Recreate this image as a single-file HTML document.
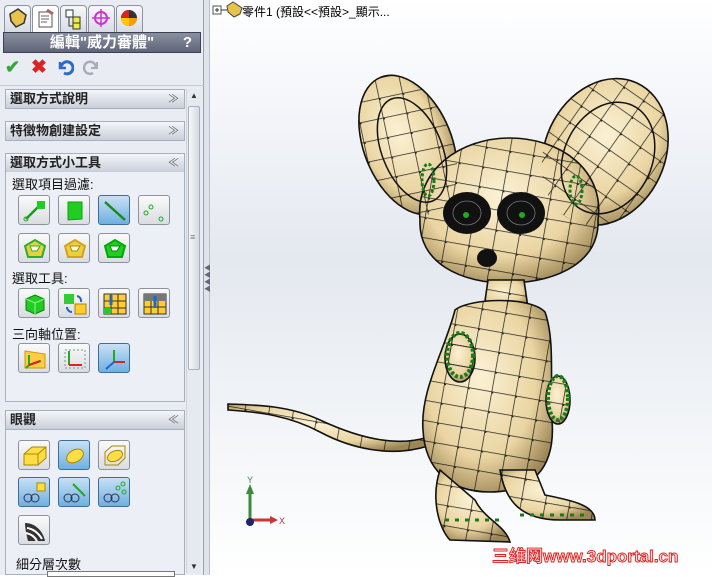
<!DOCTYPE html>
<html><head><meta charset="utf-8"><style>
*{margin:0;padding:0;box-sizing:border-box}
body{width:712px;height:575px;overflow:hidden;position:relative;font-family:"Liberation Sans","Noto Sans CJK TC",sans-serif;background:#fff}
#panel{position:absolute;left:0;top:0;width:204px;height:575px;background:#e9ecf3;border-right:1px solid #9aa0ac}
#sep{position:absolute;left:204px;top:0;width:6px;height:575px;background:#dfe3ea;border-right:1px solid #b9bec8}
#view{position:absolute;left:210px;top:0;width:502px;height:575px;background:linear-gradient(#ffffff 0%,#f3f5f9 20%,#e4e8ef 45%,#eef1f5 65%,#ffffff 100%)}
.tab{position:absolute;top:5px;width:27px;height:27px;border:1px solid #8d93a0;border-bottom:none;border-radius:4px 4px 0 0;background:linear-gradient(#f7f8fb,#d7dbe4)}
.abs{position:absolute}
.title{position:absolute;left:3px;top:32px;width:198px;height:21px;background:linear-gradient(#8a8fa0,#5f6478);border:1px solid #3c4050;color:#fff;font-weight:bold;font-size:15px;line-height:19px;text-align:center}
.hdr{position:absolute;left:5px;width:180px;height:20px;border:1px solid #a9b0bd;background:linear-gradient(#f3f5f9,#c9ced9);font-weight:bold;font-size:13px;line-height:18px;padding-left:4px;color:#222}
.hdr span{position:absolute;right:5px;top:0;font-size:11px;color:#666;font-weight:normal}
.box{position:absolute;left:5px;width:180px;border:1px solid #a9b0bd;border-top:none;background:#eceff5}
.lbl{position:absolute;left:12px;font-size:13px;color:#111}
.btn{position:absolute;width:32px;height:30px;border:1px solid #8c929e;border-radius:3px;background:linear-gradient(#fafafa,#d9dce2)}
.btn.sel{background:linear-gradient(#c8e0f4,#6fb0e0);border-color:#3d6d99}
.btn svg{position:absolute;left:3px;top:3px}
</style></head><body>
<div id="panel">
 <div class="tab" style="left:4px"><svg width="25" height="25"><path d="M5 8l8-5 8 6-2 8-8 4-5-6z" fill="#e8c24a" stroke="#333" stroke-width="1.5"/></svg></div>
 <div class="tab" style="left:32px;background:#fff"><svg width="25" height="25"><rect x="6" y="6" width="13" height="15" fill="#fff" stroke="#555"/><path d="M8 10h8M8 13h8M8 16h6" stroke="#666"/><path d="M14 4l6 4" stroke="#a66" stroke-width="3"/></svg></div>
 <div class="tab" style="left:60px"><svg width="25" height="25"><rect x="5" y="4" width="7" height="7" fill="#fff" stroke="#333"/><rect x="12" y="11" width="7" height="6" fill="#ee4" stroke="#333"/><rect x="12" y="17" width="7" height="6" fill="#ee4" stroke="#333"/><path d="M8 11v9h4" stroke="#333" fill="none"/></svg></div>
 <div class="tab" style="left:88px"><svg width="25" height="25"><circle cx="12" cy="12" r="6" fill="none" stroke="#c3c" stroke-width="2"/><path d="M12 3v18M3 12h18" stroke="#c3c" stroke-width="1.5"/></svg></div>
 <div class="tab" style="left:116px"><svg width="25" height="25"><circle cx="12" cy="12" r="8" fill="#333"/><path d="M12 12L4 12A8 8 0 0 1 12 4z" fill="#d22"/><path d="M12 12L20 12A8 8 0 0 1 12 20z" fill="#f90"/><path d="M12 12L12 20A8 8 0 0 1 4 12z" fill="#fc0"/></svg></div>
 <div class="title">編輯"威力審體"<span style="position:absolute;right:8px">?</span></div>
 <div class="abs" style="left:5px;top:57px;font-size:18px;color:#3a3;font-weight:bold">✔</div>
 <div class="abs" style="left:31px;top:56px;font-size:19px;color:#d22;font-weight:bold">✖</div>
 <svg class="abs" style="left:56px;top:58px" width="18" height="18"><path d="M4 4v6h6" fill="none" stroke="#2a6ac8" stroke-width="2.5"/><path d="M5 10a6 6 0 1 1 3 5" fill="none" stroke="#2a6ac8" stroke-width="3"/></svg>
 <svg class="abs" style="left:83px;top:58px" width="18" height="18"><path d="M14 4v6h-6" fill="none" stroke="#aab" stroke-width="2"/><path d="M13 10a6 6 0 1 0-3 5" fill="none" stroke="#aab" stroke-width="2.5"/></svg>
 <div class="abs" style="left:0;top:85px;width:204px;border-top:1px solid #c4c9d3"></div>
 <div class="abs" style="left:186px;top:89px;width:15px;height:484px;background:#e6e9ef;border-left:1px solid #cfd3db"></div>
 <div class="abs" style="left:188px;top:106px;width:12px;height:264px;background:linear-gradient(90deg,#f6f7f9,#d6dae2);border:1px solid #a9afba;border-radius:2px"></div>
 <div class="abs" style="left:190px;top:91px;font-size:8px;color:#333">▲</div>
 <div class="abs" style="left:190px;top:562px;font-size:8px;color:#333">▼</div>
 <div class="abs" style="left:190px;top:232px;font-size:9px;color:#777">≡</div>
 <div class="hdr" style="top:89px">選取方式說明<span>≫</span></div>
 <div class="hdr" style="top:121px">特徵物創建設定<span>≫</span></div>
 <div class="hdr" style="top:153px">選取方式小工具<span>≪</span></div>
 <div class="box" style="top:172px;height:230px"></div>
 <div class="lbl" style="top:174px">選取項目過濾:</div>
 <div class="btn" style="left:18px;top:195px"><svg width="26" height="24"><path d="M4 20L20 4" stroke="#1a9a1a" stroke-width="2.5"/><rect x="15" y="2" width="8" height="8" fill="#2c2"/><circle cx="4" cy="20" r="2" fill="none" stroke="#2a2"/></svg></div>
 <div class="btn" style="left:58px;top:195px"><svg width="26" height="24"><path d="M6 3h14v17l-14 1z" fill="#2c2" stroke="#0a0"/></svg></div>
 <div class="btn sel" style="left:98px;top:195px"><svg width="26" height="24"><path d="M3 3L23 21" stroke="#1a8a1a" stroke-width="2.5"/></svg></div>
 <div class="btn" style="left:138px;top:195px"><svg width="26" height="24"><circle cx="9" cy="8" r="2" fill="none" stroke="#2a2"/><circle cx="4" cy="14" r="2" fill="none" stroke="#2a2"/><circle cx="19" cy="20" r="2" fill="none" stroke="#2a2"/></svg></div>
 <div class="btn" style="left:18px;top:233px"><svg width="26" height="24"><path d="M3 9l10-6 10 6-3 11H6z" fill="#e8d23a" stroke="#3a3" stroke-width="2"/><path d="M8 9h10l-3 5H10z" fill="#fff" stroke="#3a3"/></svg></div>
 <div class="btn" style="left:58px;top:233px"><svg width="26" height="24"><path d="M3 9l10-6 10 6-3 11H6z" fill="#e8d23a" stroke="#d8a020" stroke-width="2"/><path d="M8 9h10l-3 5H10z" fill="#fff" stroke="#a80"/></svg></div>
 <div class="btn" style="left:98px;top:233px"><svg width="26" height="24"><path d="M3 9l10-6 10 6-3 11H6z" fill="#2c2" stroke="#0a0" stroke-width="2"/><path d="M8 9h10l-3 5H10z" fill="#fff" stroke="#080"/></svg></div>
 <div class="lbl" style="top:268px">選取工具:</div>
 <div class="btn" style="left:18px;top:288px"><svg width="26" height="24"><path d="M4 7l9-4 9 4v11l-9 4-9-4z" fill="#2c2" stroke="#080"/><path d="M4 7l9 4 9-4M13 11v11" stroke="#9e9" fill="none"/></svg></div>
 <div class="btn" style="left:58px;top:288px"><svg width="26" height="24"><rect x="2" y="2" width="10" height="10" fill="#3c3"/><rect x="13" y="12" width="11" height="10" fill="#fc3" stroke="#a80"/><path d="M15 4a5 5 0 0 1 4 6M10 20a5 5 0 0 1-5-5" stroke="#26c" stroke-width="2" fill="none"/></svg></div>
 <div class="btn" style="left:98px;top:288px"><svg width="26" height="24"><rect x="2" y="2" width="22" height="20" fill="#fc3" stroke="#333"/><path d="M2 9h22M2 16h22M9 2v20M16 2v20" stroke="#333"/><rect x="2" y="16" width="7" height="6" fill="#2c2"/><path d="M9 3v10" stroke="#26c" stroke-width="3"/></svg></div>
 <div class="btn" style="left:138px;top:288px"><svg width="26" height="24"><rect x="2" y="2" width="22" height="20" fill="#fc3" stroke="#333"/><rect x="2" y="2" width="22" height="7" fill="#777"/><path d="M2 15h22M9 9v13M16 9v13" stroke="#333"/><path d="M13 16V4" stroke="#26c" stroke-width="3"/></svg></div>
 <div class="lbl" style="top:324px">三向軸位置:</div>
 <div class="btn" style="left:18px;top:343px"><svg width="26" height="24"><path d="M3 4l20 3v14L3 21z" fill="#fc4" stroke="#c90"/><path d="M7 18V8M7 18l12-4M7 18l-3 3" stroke="#2a2" stroke-width="2"/><path d="M7 18l11-4" stroke="#d22" stroke-width="2"/></svg></div>
 <div class="btn" style="left:58px;top:343px"><svg width="26" height="24"><rect x="3" y="3" width="20" height="18" fill="none" stroke="#799" stroke-dasharray="2 2"/><path d="M7 4v14" stroke="#2a2" stroke-width="2"/><path d="M7 18h13" stroke="#d22" stroke-width="2"/></svg></div>
 <div class="btn sel" style="left:98px;top:343px"><svg width="26" height="24"><path d="M12 3v12" stroke="#2a2" stroke-width="2"/><path d="M12 15h11" stroke="#d22" stroke-width="2"/><path d="M12 15l-8 7" stroke="#26c" stroke-width="2"/></svg></div>
 <div class="hdr" style="top:410px">眼觀<span>≪</span></div>
 <div class="box" style="top:430px;height:145px"></div>
 <div class="btn" style="left:18px;top:440px"><svg width="26" height="24"><path d="M2 10l8-7h14v11l-8 7H2z" fill="#fd4" stroke="#a80"/><path d="M2 10h14l8-7M16 10v11" stroke="#a80" fill="none"/></svg></div>
 <div class="btn sel" style="left:58px;top:440px"><svg width="26" height="24"><ellipse cx="13" cy="12" rx="9" ry="6" transform="rotate(-30 13 12)" fill="#fd4" stroke="#a80"/></svg></div>
 <div class="btn" style="left:98px;top:440px"><svg width="26" height="24"><path d="M3 8l7-6h13v12l-7 7H3z" fill="none" stroke="#a80"/><ellipse cx="13" cy="12" rx="8" ry="5" transform="rotate(-25 13 12)" fill="#fd4" stroke="#a80"/></svg></div>
 <div class="btn sel" style="left:18px;top:477px"><svg width="26" height="24"><circle cx="6" cy="17" r="4" fill="none" stroke="#335"/><circle cx="13" cy="17" r="4" fill="none" stroke="#335"/><rect x="15" y="2" width="8" height="8" fill="#fd4" stroke="#a80"/></svg></div>
 <div class="btn sel" style="left:58px;top:477px"><svg width="26" height="24"><circle cx="6" cy="17" r="4" fill="none" stroke="#335"/><circle cx="13" cy="17" r="4" fill="none" stroke="#335"/><path d="M11 3l12 12" stroke="#2a2" stroke-width="2"/></svg></div>
 <div class="btn sel" style="left:98px;top:477px"><svg width="26" height="24"><circle cx="6" cy="17" r="4" fill="none" stroke="#335"/><circle cx="13" cy="17" r="4" fill="none" stroke="#335"/><circle cx="16" cy="7" r="2" fill="none" stroke="#2a2"/><circle cx="21" cy="3" r="2" fill="none" stroke="#2a2"/><circle cx="22" cy="11" r="2" fill="none" stroke="#2a2"/></svg></div>
 <div class="btn" style="left:18px;top:515px"><svg width="26" height="24"><path d="M3 4c10 0 18 8 20 18H6C4 14 3 8 3 4z" fill="#333"/><path d="M5 9c7 1 12 6 15 11M4 14c5 1 9 4 11 8" stroke="#fff" stroke-width="2" fill="none"/></svg></div>
 <div class="lbl" style="top:554px;left:16px">細分層次數</div>
 <div class="abs" style="left:47px;top:571px;width:128px;height:6px;border:1px solid #777;background:#fff"></div>
</div>
<div id="sep"><div style="position:absolute;left:0;top:265px;width:6px;height:28px;color:#667;font-size:7px;line-height:7px">◀<br>◀<br>◀<br>◀</div></div>
<div id="view">
 <svg width="502" height="575" style="position:absolute;left:0;top:0">
  <defs>
   <radialGradient id="g" cx="45%" cy="40%" r="65%"><stop offset="0" stop-color="#fbf1d4"/><stop offset=".65" stop-color="#ead5a2"/><stop offset="1" stop-color="#9c8656"/></radialGradient>
   <pattern id="m" width="24" height="20" patternUnits="userSpaceOnUse" patternTransform="rotate(10)"><path d="M0 0H24M0 0V20" stroke="#111" stroke-width="1.5" fill="none"/><rect x="-2" y="-2" width="4" height="4" fill="#111"/></pattern>
  </defs>
  <text x="32" y="16" font-size="12" fill="#000">零件1 (預設&lt;&lt;預設&gt;_顯示...</text>
  <rect x="3" y="6" width="8" height="8" fill="#fff" stroke="#555"/><path d="M5 10h4M7 8v4M11 10h6" stroke="#333"/>
  <path d="M17 6l6-4 9 6-2 6-6 3-6-5z" fill="#e8c24a" stroke="#444"/>
  <g transform="translate(-210,0)">
   <g id="shape">
   <path d="M228 404C260 405 290 406 320 420S390 448 425 438l3 8C390 458 350 448 320 432S260 412 228 410z"/>
   <ellipse cx="408" cy="145" rx="44" ry="73" transform="rotate(-22 408 145)"/>
   <ellipse cx="605" cy="152" rx="60" ry="76" transform="rotate(25 605 152)"/>
   <path d="M420 220C415 170 460 138 510 138S605 170 598 220C600 260 560 282 510 283S418 262 420 220z"/>
   <path d="M488 280h36l4 28h-44z"/>
   <path d="M455 310C470 298 530 296 545 312C555 340 550 380 552 420C556 470 530 492 490 492S425 470 423 430C420 390 445 350 455 310z"/>
   <path d="M440 470C430 500 440 530 450 540L510 542C505 525 485 520 475 500z"/>
   <path d="M500 470C505 500 520 520 560 520L595 520C595 505 570 500 545 495L535 470z"/>
   <ellipse cx="460" cy="358" rx="15" ry="24"/>
   <ellipse cx="558" cy="400" rx="12" ry="24"/>
   </g>
  </g>
  <g transform="translate(-210,0)" fill="url(#g)" stroke="#111" stroke-width="1.6">
   <use href="#shape"/>
  </g>
  <g transform="translate(-210,0)" fill="url(#m)" stroke="none" opacity=".9">
   <use href="#shape"/>
  </g>
  <g transform="translate(-210,0)">
   <ellipse cx="412" cy="150" rx="30" ry="55" transform="rotate(-22 412 150)" fill="none" stroke="#111" stroke-width="1.5"/>
   <ellipse cx="608" cy="158" rx="44" ry="58" transform="rotate(25 608 158)" fill="none" stroke="#111" stroke-width="1.5"/>
   <ellipse cx="467" cy="213" rx="24" ry="21" fill="#111"/>
   <ellipse cx="521" cy="213" rx="24" ry="21" fill="#111"/>
   <ellipse cx="467" cy="213" rx="14" ry="12" fill="none" stroke="#777" stroke-width=".8"/>
   <ellipse cx="521" cy="213" rx="14" ry="12" fill="none" stroke="#777" stroke-width=".8"/>
   <circle cx="466" cy="215" r="3" fill="#2a2"/><circle cx="522" cy="215" r="3" fill="#2a2"/>
   <ellipse cx="487" cy="258" rx="10" ry="9" fill="#111"/>
   <ellipse cx="460" cy="355" rx="13" ry="22" fill="none" stroke="#1a7a1a" stroke-width="4" stroke-dasharray="3 2"/>
   <ellipse cx="558" cy="398" rx="10" ry="22" fill="none" stroke="#1a7a1a" stroke-width="4" stroke-dasharray="3 2"/>
   <ellipse cx="428" cy="180" rx="6" ry="16" fill="none" stroke="#1a7a1a" stroke-width="3" stroke-dasharray="3 2"/>
   <ellipse cx="576" cy="190" rx="6" ry="14" fill="none" stroke="#1a7a1a" stroke-width="3" stroke-dasharray="3 2"/>
   <path d="M445 520h60M520 515h70" stroke="#1a7a1a" stroke-width="3" stroke-dasharray="4 6"/>
  </g>
  <g transform="translate(40,520)">
   <path d="M0 0V-30" stroke="#3a8a3a" stroke-width="3"/><path d="M-4-26L0-36 4-26z" fill="#3a8a3a"/>
   <path d="M0 0H22" stroke="#c33" stroke-width="3"/><path d="M20-4L28 0 20 4z" fill="#c33"/>
   <circle cx="0" cy="2" r="4" fill="#226"/>
   <text x="-3" y="-37" font-size="9" fill="#3a8a3a">Y</text><text x="29" y="4" font-size="9" fill="#c33">X</text>
  </g>
  <text x="282" y="562" font-size="17" font-weight="bold" fill="#fbe3e3" stroke="#e02020" stroke-width="0.9" font-family="Liberation Sans,Noto Sans CJK SC,sans-serif">三维网www.3dportal.cn</text>
 </svg>
</div>
</body></html>
